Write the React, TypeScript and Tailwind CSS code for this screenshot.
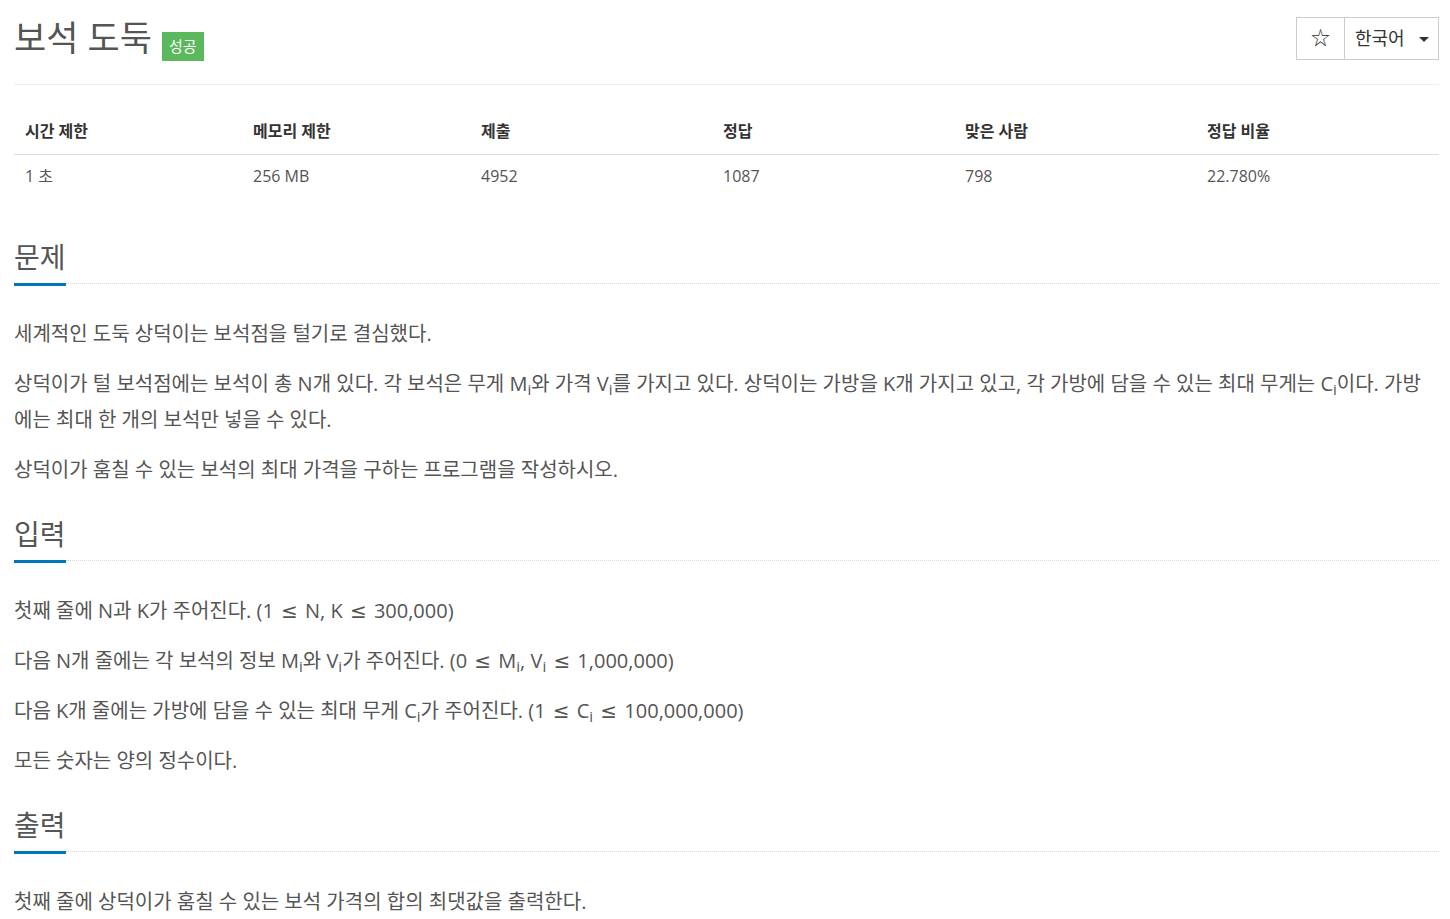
const FONT = "font-['Open_Sans','Noto_Sans_CJK_KR',sans-serif]";

const stats = [
	{ label: "시간 제한", value: "1 초" },
	{ label: "메모리 제한", value: "256 MB" },
	{ label: "제출", value: "4952" },
	{ label: "정답", value: "1087" },
	{ label: "맞은 사람", value: "798" },
	{ label: "정답 비율", value: "22.780%" },
];

function SectionTitle({ title }: { title: string }) {
	return (
		<div className="flex items-end">
			<span className="border-b-[3px] border-[#0076c0] pb-[8px] text-[28px] leading-[36px] text-[#555]">
				{title}
			</span>
			<div className="mb-[2px] flex-1 border-b border-dotted border-[#d5dbe3]" />
		</div>
	);
}

function P({ children }: { children: React.ReactNode }) {
	return <p className="text-[20px] leading-[36px] text-[#555]">{children}</p>;
}

function Sub({ children }: { children: React.ReactNode }) {
	return <sub>{children}</sub>;
}

// the reference draws ≤ in a wider symbol font
function Le() {
	return <span className="mx-[2px] font-['DejaVu_Sans',sans-serif] text-[20px] leading-none">≤</span>;
}

function Body({ children }: { children: React.ReactNode }) {
	return <div className="flex flex-col gap-[14px] pt-[30px]">{children}</div>;
}

export default function App() {
	return (
		<div className={`${FONT} min-h-[919px] bg-white`}>
			<div className="ml-[14px] w-[1425px]">
				<div className="flex h-[85px] items-start justify-between border-b border-[#eee] pt-[17px]">
					<div className="mt-[1px] flex items-start">
						<h1 className="text-[35px] leading-[40px] text-[#555]">보석 도둑</h1>
						<span className="ml-[10px] mt-[14px] flex h-[29px] items-center bg-[#5cb85c] px-[7px] text-[15px] text-white">
							성공
						</span>
					</div>
					<div className="flex h-[43px] border border-[#ccc] text-[#333]">
						<div className="flex w-[48px] items-center justify-center border-r border-[#ccc] text-[19px]">
							☆
						</div>
						<div className="flex w-[93px] items-center pl-[10px] text-[18px]">
							한국어
							<span className="ml-[14px] mt-[2px] h-0 w-0 border-x-[5px] border-t-[5px] border-x-transparent border-t-[#333]" />
						</div>
					</div>
				</div>

				<div className="mt-[23px] text-[16px]">
					<div className="grid h-[47px] grid-cols-[228px_228px_242px_242px_242px_1fr] items-center border-b border-[#ddd]">
						{stats.map((s) => (
							<div key={s.label} className="pl-[11px] font-bold text-[#333]">
								{s.label}
							</div>
						))}
					</div>
					<div className="grid h-[42px] grid-cols-[228px_228px_242px_242px_242px_1fr] items-center">
						{stats.map((s) => (
							<div key={s.label} className="pl-[11px] text-[#555]">
								{s.value}
							</div>
						))}
					</div>
				</div>

				<div className="mt-[42px]">
					<SectionTitle title="문제" />
					<Body>
						<P>세계적인 도둑 상덕이는 보석점을 털기로 결심했다.</P>
						<P>
							상덕이가 털 보석점에는 보석이 총 N개 있다. 각 보석은 무게 M<Sub>i</Sub>와 가격 V
							<Sub>i</Sub>를 가지고 있다. 상덕이는 가방을 K개 가지고 있고, 각 가방에 담을 수 있는 최대 무게는 C
							<Sub>i</Sub>이다. 가방에는 최대 한 개의 보석만 넣을 수 있다.
						</P>
						<P>상덕이가 훔칠 수 있는 보석의 최대 가격을 구하는 프로그램을 작성하시오.</P>
					</Body>
				</div>

				<div className="mt-[28px]">
					<SectionTitle title="입력" />
					<Body>
						<P>
							첫째 줄에 N과 K가 주어진다. (1 <Le /> N, K <Le /> 300,000)
						</P>
						<P>
							다음 N개 줄에는 각 보석의 정보 M<Sub>i</Sub>와 V<Sub>i</Sub>가 주어진다. (0 <Le /> M
							<Sub>i</Sub>, V<Sub>i</Sub> <Le /> 1,000,000)
						</P>
						<P>
							다음 K개 줄에는 가방에 담을 수 있는 최대 무게 C<Sub>i</Sub>가 주어진다. (1 <Le /> C
							<Sub>i</Sub> <Le /> 100,000,000)
						</P>
						<P>모든 숫자는 양의 정수이다.</P>
					</Body>
				</div>

				<div className="mt-[28px]">
					<SectionTitle title="출력" />
					<Body>
						<P>첫째 줄에 상덕이가 훔칠 수 있는 보석 가격의 합의 최댓값을 출력한다.</P>
					</Body>
				</div>
			</div>
		</div>
	);
}
